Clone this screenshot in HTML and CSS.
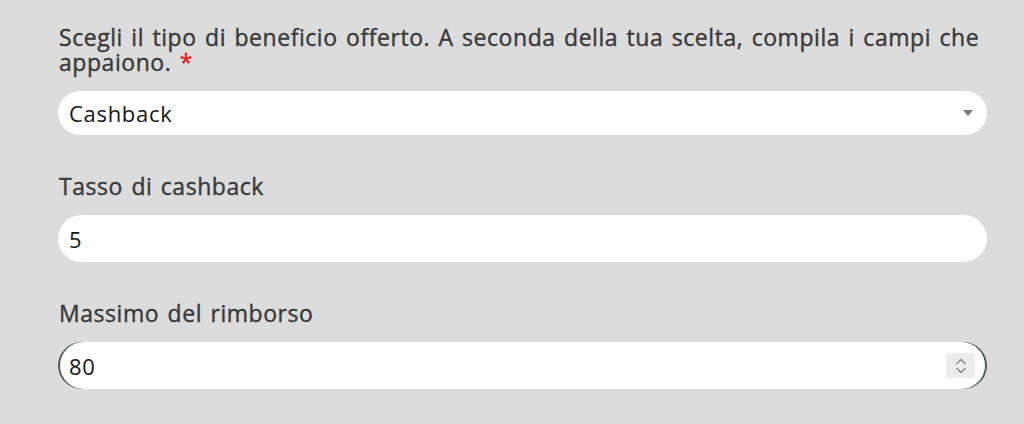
FILE: index.html
```html
<!DOCTYPE html>
<html lang="it">
<head>
<meta charset="utf-8">
<title>Beneficio</title>
<link rel="stylesheet" href="styles.css">
</head>
<body>
<form class="form">
  <div class="field">
    <label class="label required">Scegli il tipo di beneficio offerto. A seconda della tua scelta, compila i campi che appaiono.</label>
    <div class="control control-select">
      <span class="value">Cashback</span>
      <svg class="arrow" width="10" height="6" viewBox="0 0 10 6"><path d="M0 0H10L5 6Z" fill="#777"/></svg>
    </div>
  </div>
  <div class="field">
    <label class="label">Tasso di cashback</label>
    <div class="control control-input">
      <span class="value">5</span>
    </div>
  </div>
  <div class="field">
    <label class="label">Massimo del rimborso</label>
    <div class="control control-input control-focus">
      <span class="value">80</span>
      <span class="spinner">
        <svg width="12" height="20" viewBox="0 0 12 20"><path d="M2 7.5L6 3.5L10 7.5M2 12.5L6 16.5L10 12.5" fill="none" stroke="#8c8c8c" stroke-width="1.6" stroke-linecap="round" stroke-linejoin="round"/></svg>
      </span>
    </div>
  </div>
</form>
</body>
</html>
```
FILE: styles.css
```css
html, body {
  margin: 0;
  padding: 0;
  background: #dcdcdc;
}
.form {
  width: 929px;
  padding: 25px 0 0 58px;
  display: flex;
  flex-direction: column;
  gap: 39px;
  font-family: "Open Sans", Lato, sans-serif;
}
.field {
  display: flex;
  flex-direction: column;
  gap: 16px;
}
.label {
  font-size: 23px;
  line-height: 25px;
  letter-spacing: 0.55px;
  word-spacing: 1.9px;
  font-weight: 400;
  -webkit-text-stroke: 0.4px #3a3a3a;
  color: #3a3a3a;
  padding-left: 1px;
}
.required::after {
  content: " *";
  color: #e8141b;
  -webkit-text-stroke: 0.4px #e8141b;
}
.control {
  background: #fff;
  border-radius: 24px;
  display: flex;
  align-items: center;
  padding: 0 12px 0 11px;
  box-sizing: border-box;
  font-size: 22px;
  letter-spacing: 0.7px;
  color: #161616;
}
.control-select {
  height: 44px;
  border-radius: 22px;
}
.control-input {
  height: 47px;
}
.value {
  flex: 1;
}
.arrow {
  margin-right: 2px;
}
.control-focus {
  box-shadow: inset 2px 0 0 #4d5858, inset -2px 0 0 #4d5858;
}
.spinner {
  width: 29px;
  height: 25px;
  background: #ececec;
  display: flex;
  align-items: center;
  justify-content: center;
}
```
